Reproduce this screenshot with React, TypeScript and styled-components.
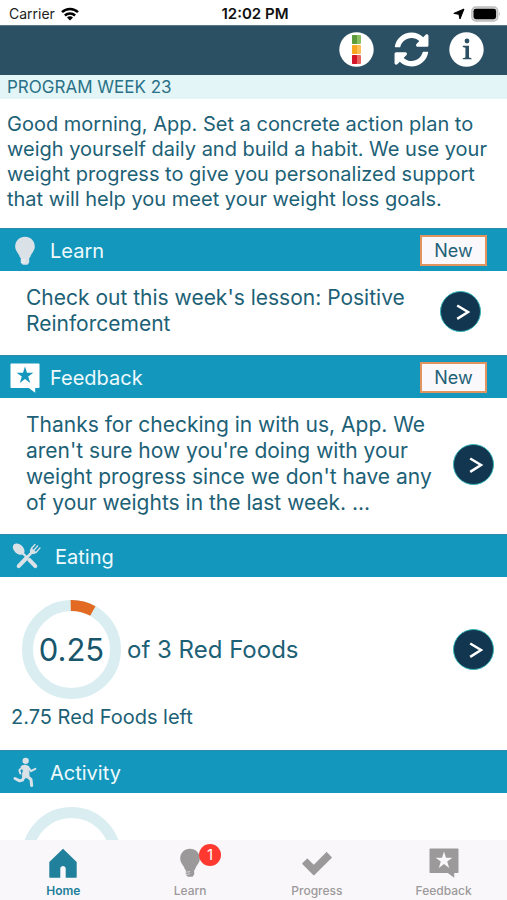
import React from "react";
import styled, { createGlobalStyle } from "styled-components";
import { FaSyncAlt } from "react-icons/fa";

const GlobalStyle = createGlobalStyle`
  *, *::before, *::after { box-sizing: border-box; }
  body { margin: 0; background: #ffffff; font-family: Inter, "Liberation Sans", sans-serif; }
  h2, p { margin: 0; font-weight: 400; }
  button { font: inherit; border: 0; padding: 0; background: none; cursor: pointer; }
  svg { display: block; }
`;

const ink = "#1d6176";
const teal = "#1497bc";

const Screen = styled.div`
  height: 100vh;
  display: flex;
  flex-direction: column;
  color: ${ink};
`;

const StatusBar = styled.div`
  flex: none;
  height: 25px;
  padding: 2px 6px 0 9px;
  display: grid;
  grid-template-columns: 1fr auto 1fr;
  align-items: center;
  color: #222222;
  font-size: 14px;
  line-height: 20px;
`;

const StatusGroup = styled.div<{ $end?: boolean }>`
  display: flex;
  align-items: center;
  gap: 6px;
  justify-content: ${(p) => (p.$end ? "flex-end" : "flex-start")};
`;

const Clock = styled.span`
  font-weight: 600;
  font-size: 15px;
  color: #111111;
`;

const Toolbar = styled.header`
  flex: none;
  height: 50px;
  padding: 0 23px 2px;
  display: flex;
  align-items: center;
  justify-content: flex-end;
  gap: 20px;
  background: #2b5063;
  border-top: 1px solid #58788a;
`;

const ToolButton = styled.button`
  width: 35px;
  height: 35px;
  color: #ffffff;
`;

const Content = styled.main`
  flex: 1;
  min-height: 0;
  overflow: hidden;
`;

const WeekBar = styled.div`
  padding: 1px 7px 0;
  background: #e3f5f6;
  font-size: 17px;
  line-height: 23px;
  color: #2a7187;
`;

const Intro = styled.p`
  padding: 13px 7px 16px;
  font-size: 20px;
  line-height: 25px;
`;

const SectionBar = styled.div`
  height: 43px;
  padding: 1px 20px 0 10px;
  display: flex;
  align-items: center;
  background: ${teal};
  border-top: 1px solid #2c8ba8;
`;

const SectionIcon = styled.span<{ $wide?: boolean }>`
  flex: none;
  width: ${(p) => (p.$wide ? 45 : 40)}px;
  padding-left: ${(p) => (p.$wide ? 2 : 0)}px;
`;

const SectionTitle = styled.h2`
  flex: 1;
  font-size: 20px;
  line-height: 24px;
  color: #eefafd;
`;

const NewButton = styled.button`
  && {
    width: 67px;
    height: 31px;
    border: 2px solid #e2945f;
    background: #faf8fb;
    color: ${ink};
    font-size: 18px;
    line-height: 24px;
  }
`;

const CardRow = styled.div<{ $inset?: boolean }>`
  display: flex;
  align-items: center;
  padding: ${(p) => (p.$inset ? "14px 26px 18px" : "14px 13px 18px 26px")};
`;

const CardText = styled.p`
  flex: 1;
  padding-right: 12px;
  font-size: 21px;
  line-height: 26px;
`;

const RoundButton = styled.button`
  && {
    flex: none;
    width: 41px;
    height: 41px;
    display: grid;
    place-items: center;
    border-radius: 50%;
    border: 1px solid #35b5b8;
    background: #12364f;
  }
`;

const Goal = styled.div<{ $compact?: boolean }>`
  padding: ${(p) => (p.$compact ? 14 : 23)}px 13px 20px 11px;
`;

const GoalRow = styled.div`
  display: flex;
  align-items: center;
  padding-left: 11px;
`;

const Dial = styled.div`
  flex: none;
  display: grid;
  place-items: center;
  & > * { grid-area: 1 / 1; }
`;

const DialValue = styled.span`
  font-size: 31px;
  line-height: 40px;
  color: #17566b;
`;

const GoalLabel = styled.p`
  flex: 1;
  padding-left: 6px;
  font-size: 24px;
  line-height: 30px;
`;

const GoalRest = styled.p`
  padding-top: 5px;
  font-size: 20px;
  line-height: 26px;
`;

const Tabs = styled.nav`
  flex: none;
  height: 60px;
  display: grid;
  grid-template-columns: repeat(4, 1fr);
  background: #f9f7f9;
`;

const Tab = styled.button<{ $on?: boolean }>`
  display: flex;
  flex-direction: column;
  align-items: center;
  && { padding-top: 8px; font-size: 12px; line-height: 16px; font-weight: ${(p) => (p.$on ? 600 : 500)}; }
  color: ${(p) => (p.$on ? "#21809b" : "#9c999b")};
`;

const TabIcon = styled.span`
  position: relative;
  height: 35px;
`;

const Badge = styled.span`
  position: absolute;
  left: 24px;
  top: -4px;
  width: 22px;
  height: 22px;
  border-radius: 50%;
  background: #ff3830;
  color: #ffffff;
  font-size: 15px;
  line-height: 22px;
  font-weight: 400;
  text-align: center;
`;

const Bulb = () => (
  <svg width="30" height="30" viewBox="0 0 30 30" fill="currentColor" aria-hidden="true">
    <path d="M15 .7c-5.500 0-9.800 4.200-9.800 9.700 0 4.600 3.200 6.200 4.400 10.200.3 1 .9 1.500 1.800 1.500h7.200c.9 0 1.500-.5 1.800-1.500 1.200-4 4.400-5.600 4.400-10.200C24.800 4.900 20.500.7 15 .7Z" />
    <path d="M10.800 21.800h8.400v4.600l-1.700 2.300h-4.600l-2.100-2Z" />
    <path d="M10.800 24.300l4.400-.8M10.900 26.500l4.400-.8" stroke="#ffffff" strokeOpacity=".6" strokeWidth=".9" />
  </svg>
);

const StarBubble = () => (
  <svg width="30" height="30" viewBox="0 0 30 30" fill="currentColor" aria-hidden="true">
    <path
      fillRule="evenodd"
      d="M1.500.6h27c.6 0 1 .4 1 1v22.500c0 .6-.4 1-1 1h-3.300v4.700l-6.400-4.700H1.500c-.6 0-1-.4-1-1V1.600c0-.6.400-1 1-1ZM15 3.500l-2 6.200H6.600l5.200 3.900-2 6.300 5.200-3.900 5.200 3.900-2-6.300 5.200-3.900H17Z"
    />
  </svg>
);

const Utensils = () => (
  <svg width="30" height="27" viewBox="38 42 90 80" fill="none" stroke="currentColor" strokeLinecap="round" aria-hidden="true">
    <ellipse cx="58" cy="60" rx="20" ry="14" transform="rotate(43 58 60)" fill="currentColor" stroke="none" />
    <path d="M71 73L80 82" strokeWidth="7" />
    <path d="M90 92L108 111" strokeWidth="12" />
    <path d="M58 111L80 88" strokeWidth="12" />
    <path d="M80 88L98 69" strokeWidth="8" />
    <path d="M107 46L96 58M115 50L103 64M122 56L110 70" strokeWidth="4" />
    <path d="M96 58Q90 66 94 71Q101 77 110 70L103 63Z" fill="currentColor" strokeWidth="3" />
  </svg>
);

const Runner = () => (
  <svg width="30" height="31" viewBox="31 50 90 92" fill="none" stroke="currentColor" strokeLinecap="round" strokeLinejoin="round" aria-hidden="true">
    <circle cx="78" cy="61" r="9.500" fill="currentColor" stroke="none" />
    <path d="M65 77Q76 70 87 78L88 103Q90 111 78 112Q66 111 68 102L71 92Z" fill="currentColor" strokeWidth="3" />
    <path d="M68 80L59 89L62 99" strokeWidth="6" />
    <path d="M85 80L94 92L107 85" strokeWidth="6" />
    <path d="M75 106L68 119L60 121L46 114" strokeWidth="9" />
    <path d="M81 106L94 117L96 135" strokeWidth="9" />
  </svg>
);

const Home = () => (
  <svg width="30" height="30" viewBox="0 0 30 30" fill="currentColor" aria-hidden="true">
    <path d="M15 .8l13.700 13.300V29c0 .6-.2.800-.8.800H17.700v-9.200c0-3.500-5.400-3.500-5.400 0v9.200H2.100c-.6 0-.8-.2-.8-.8V14.100Z" />
  </svg>
);

const Check = () => (
  <svg width="30" height="30" viewBox="0 0 30 30" fill="currentColor" aria-hidden="true">
    <path d="M25.200 4.400l4.400 4.600c.4.400.4.700 0 1.100L12.400 26.900c-.4.400-.8.400-1.200 0L.5 16.300c-.4-.4-.4-.8 0-1.200l4.200-4.200c.4-.4.800-.4 1.200 0l5.900 5.800L24 4.400c.4-.4.800-.4 1.200 0Z" />
  </svg>
);

const Scale = () => (
  <svg width="35" height="35" viewBox="0 0 35 35" aria-hidden="true">
    <circle cx="17.500" cy="17.500" r="17.200" fill="#ffffff" />
    <rect x="13" y="3" width="9" height="9" rx="1" fill="#8cbf62" />
    <rect x="13" y="3" width="5" height="9" rx="1" fill="#5d9b3d" />
    <rect x="13" y="13" width="9" height="9" rx="1" fill="#fbbf58" />
    <rect x="13" y="13" width="5" height="9" rx="1" fill="#f8a51f" />
    <rect x="13" y="23" width="9" height="9" rx="1" fill="#e9655f" />
    <rect x="13" y="23" width="5" height="9" rx="1" fill="#d5152a" />
  </svg>
);

const Info = () => (
  <svg width="35" height="35" viewBox="0 0 35 35" aria-hidden="true">
    <circle cx="17.500" cy="17.500" r="17.200" fill="#ffffff" />
    <circle cx="18" cy="9" r="2.400" fill="#2b5063" />
    <path d="M13.800 13.700h6.200v11.800l2.500.7v1h-8.700v-1l2.600-.7v-9.800l-2.600-.8Z" fill="#2b5063" />
  </svg>
);

const Wifi = () => (
  <svg width="18" height="14" viewBox="0 0 18 14" fill="none" stroke="#000000" strokeWidth="2.500" aria-hidden="true">
    <path d="M1 5.200a11.300 11.300 0 0 1 16 0" />
    <path d="M3.900 8.500a7.200 7.200 0 0 1 10.200 0" />
    <path d="M9 13.600l-3-3.100a4.200 4.200 0 0 1 6 0Z" fill="#000000" stroke="none" />
  </svg>
);

const LocationArrow = () => (
  <svg width="12" height="12" viewBox="0 0 12 12" aria-hidden="true">
    <path d="M11 1L7 11 5.900 6.300.8 5.400Z" fill="#000000" stroke="#000000" strokeLinejoin="round" />
  </svg>
);

const Battery = () => (
  <svg width="30" height="16" viewBox="0 0 30 16" aria-hidden="true">
    <rect x=".8" y="1" width="26" height="14" rx="4" fill="#d9d9d9" stroke="#bcbcbc" strokeWidth="1.300" />
    <rect x="2.500" y="2.800" width="22.600" height="10.400" rx="2.400" fill="#000000" />
    <path d="M28.200 5.500q1.700 2.500 0 5Z" fill="#b5b5b5" />
  </svg>
);

const Chevron = () => (
  <svg width="39" height="39" viewBox="0 0 39 39" fill="none" stroke="#ffffff" strokeWidth="2.500" aria-hidden="true">
    <path d="M16.200 13.500l10.800 6.500-10.800 6.900" />
  </svg>
);

const radius = 44;
const around = 2 * Math.PI * radius;

const Ring = ({ part }: { part: number }) => (
  <svg width="99" height="99" viewBox="0 0 99 99" fill="none" strokeWidth="11" aria-hidden="true">
    <circle cx="49.500" cy="49.500" r={radius} stroke="#daeef2" />
    {part > 0 && (
      <circle
        cx="49.500"
        cy="49.500"
        r={radius}
        stroke="#e26a22"
        strokeDasharray={`${around * part} ${around}`}
        transform="rotate(-91 49.500 49.500)"
      />
    )}
  </svg>
);

type SectionProps = {
  title: string;
  icon: React.ReactNode;
  tint?: string;
  wide?: boolean;
  fresh?: boolean;
  children: React.ReactNode;
};

const Tint = styled.span<{ $tint: string }>`
  color: ${(p) => p.$tint};
`;

const Section = ({ title, icon, tint = "#dae2e8", wide, fresh, children }: SectionProps) => (
  <section>
    <SectionBar>
      <SectionIcon $wide={wide}>
        <Tint $tint={tint}>{icon}</Tint>
      </SectionIcon>
      <SectionTitle>{title}</SectionTitle>
      {fresh && <NewButton type="button">New</NewButton>}
    </SectionBar>
    {children}
  </section>
);

const Open = ({ label }: { label: string }) => (
  <RoundButton type="button" aria-label={label}>
    <Chevron />
  </RoundButton>
);

export default function App() {
  return (
    <Screen>
      <GlobalStyle />
      <StatusBar>
        <StatusGroup>
          <span>Carrier</span>
          <Wifi />
        </StatusGroup>
        <Clock>12:02 PM</Clock>
        <StatusGroup $end>
          <LocationArrow />
          <Battery />
        </StatusGroup>
      </StatusBar>
      <Toolbar>
        <ToolButton type="button" aria-label="Food colors"><Scale /></ToolButton>
        <ToolButton type="button" aria-label="Refresh"><FaSyncAlt size={35} /></ToolButton>
        <ToolButton type="button" aria-label="Information"><Info /></ToolButton>
      </Toolbar>
      <Content>
        <WeekBar>PROGRAM WEEK 23</WeekBar>
        <Intro>
          Good morning, App. Set a concrete action plan to weigh yourself daily and build a habit. We use your
          weight progress to give you personalized support that will help you meet your weight loss goals.
        </Intro>
        <Section title="Learn" icon={<Bulb />} fresh>
          <CardRow $inset>
            <CardText>Check out this week's lesson: Positive Reinforcement</CardText>
            <Open label="Open lesson" />
          </CardRow>
        </Section>
        <Section title="Feedback" icon={<StarBubble />} tint="#ffffff" fresh>
          <CardRow>
            <CardText>
              Thanks for checking in with us, App. We aren't sure how you're doing with your weight progress since
              we don't have any of your weights in the last week. ...
            </CardText>
            <Open label="Open feedback" />
          </CardRow>
        </Section>
        <Section title="Eating" icon={<Utensils />} wide>
          <Goal>
            <GoalRow>
              <Dial>
                <Ring part={0.25 / 3} />
                <DialValue>0.25</DialValue>
              </Dial>
              <GoalLabel>of 3 Red Foods</GoalLabel>
              <Open label="Open eating" />
            </GoalRow>
            <GoalRest>2.75 Red Foods left</GoalRest>
          </Goal>
        </Section>
        <Section title="Activity" icon={<Runner />}>
          <Goal $compact>
            <GoalRow>
              <Dial>
                <Ring part={0} />
              </Dial>
            </GoalRow>
          </Goal>
        </Section>
      </Content>
      <Tabs>
        <Tab type="button" $on><TabIcon><Home /></TabIcon>Home</Tab>
        <Tab type="button"><TabIcon><Bulb /><Badge>1</Badge></TabIcon>Learn</Tab>
        <Tab type="button"><TabIcon><Check /></TabIcon>Progress</Tab>
        <Tab type="button"><TabIcon><StarBubble /></TabIcon>Feedback</Tab>
      </Tabs>
    </Screen>
  );
}
